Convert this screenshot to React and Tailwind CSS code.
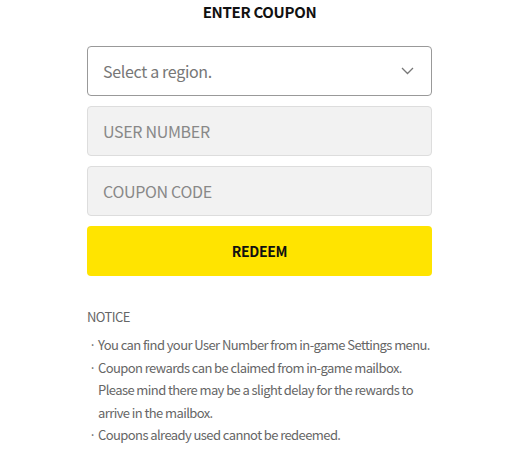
export default function App() {
  const notices = [
    ['You can find your User Number from in-game Settings menu.'],
    [
      'Coupon rewards can be claimed from in-game mailbox.',
      'Please mind there may be a slight delay for the rewards to',
      'arrive in the mailbox.',
    ],
    ['Coupons already used cannot be redeemed.'],
  ]

  return (
    <div className="w-[515px] h-[458px] bg-white font-['Noto_Sans_CJK_KR',sans-serif] tracking-[-0.02em]">
      <div className="ml-[87px] w-[345px] pt-[1px]">
        <h1 className="text-center text-[15px] leading-[22px] font-bold text-[#111]">ENTER COUPON</h1>

        <div className="mt-[23px] flex flex-col gap-[10px]">
          <div className="h-[50px] flex items-center justify-between rounded-[4px] border border-[#999] pl-[15px] pr-[17px]">
            <span className="text-[16px] text-[#777]">Select a region.</span>
            <svg width="13" height="8" viewBox="0 0 13 8" fill="none">
              <path d="M1 1l5.5 5.5L12 1" stroke="#777" strokeWidth="1.3" />
            </svg>
          </div>
          <input
            placeholder="USER NUMBER"
            className="h-[50px] rounded-[4px] border border-[#ddd] bg-[#f2f2f2] px-[15px] text-[16px] outline-none placeholder:text-[#888]"
          />
          <input
            placeholder="COUPON CODE"
            className="h-[50px] rounded-[4px] border border-[#ddd] bg-[#f2f2f2] px-[15px] text-[16px] outline-none placeholder:text-[#888]"
          />
          <button className="h-[50px] rounded-[4px] bg-[#ffe400] text-[14px] font-bold text-[#111]">REDEEM</button>
        </div>

        <div className="mt-[31px] text-[13px] text-[#666] tracking-[-0.045em]">
          <p className="leading-[20px]">NOTICE</p>
          <ul className="mt-[7px]">
            {notices.map((lines, i) => (
              <li key={i} className="flex leading-[22.5px] whitespace-nowrap">
                <span className="w-[11px] shrink-0 pl-[2px]">·</span>
                <span>
                  {lines.map((l, j) => (
                    <span key={j} className="block">{l}</span>
                  ))}
                </span>
              </li>
            ))}
          </ul>
        </div>
      </div>
    </div>
  )
}
